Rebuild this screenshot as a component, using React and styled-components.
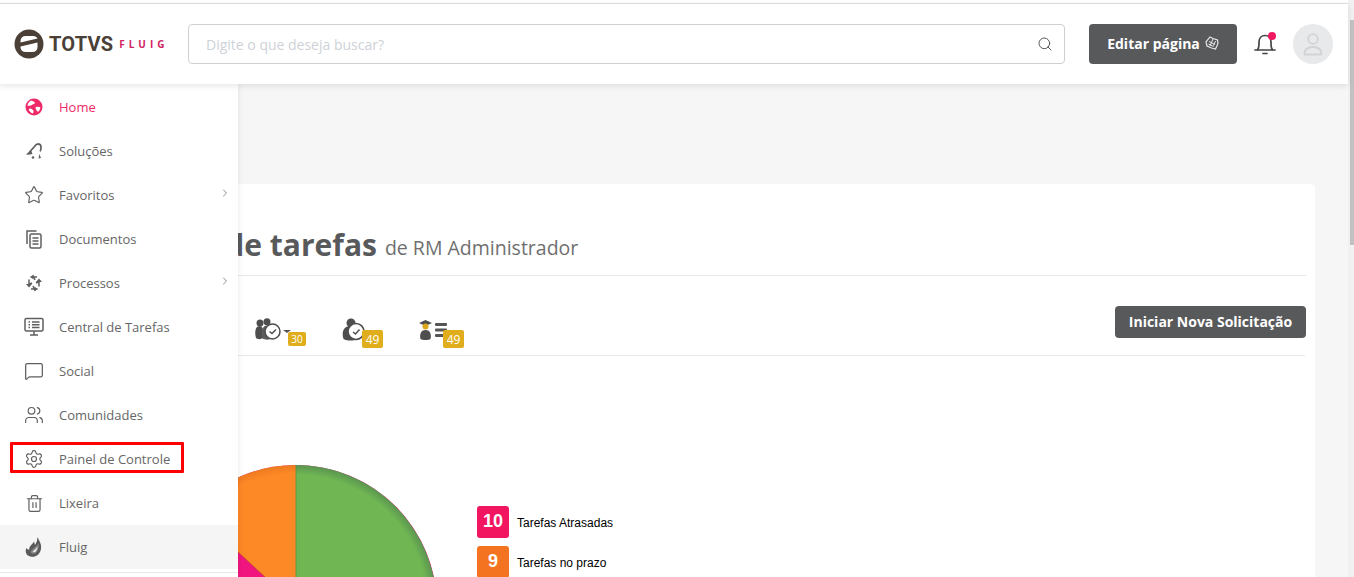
import React from "react";
import styled, { createGlobalStyle } from "styled-components";
import {
  ChevronRight,
  Search,
  Settings,
  Star,
  Trash2,
  Users,
  MessageSquare,
} from "lucide-react";

const GlobalStyle = createGlobalStyle`
  html, body {
    margin: 0;
    padding: 0;
    height: 100%;
    overflow: hidden;
    background: #fff;
    font-family: "Open Sans", "Liberation Sans", sans-serif;
  }
  * { box-sizing: border-box; }
`;

const GlobeIcon = () => (
  <svg width="18" height="18" viewBox="0 0 18 18">
    <circle cx="9" cy="9" r="8.5" fill="#ee2a68" />
    <path
      d="M6 2.500c2 .6 3.500 1 4 2.400-.7 1.400-2.600.9-3.200 2.200-1 1.100-3 .7-4.300.9C2.500 5.500 4 3.400 6 2.500zM11 9c1.600-.6 3.400-.4 4.400.4-.2 1.800-1 3.300-2.400 4.400-1.200-.8-1.400-2-2.200-2.800-.4-.7-.4-1.500.2-2zM5 10.500c1.500.2 3 1 3.500 2.300.2 1-.3 1.900-.5 2.600-2-.4-3.600-2-4.200-4 .3-.5.700-.8 1.200-.9z"
      fill="#fff"
    />
  </svg>
);

const SolucoesIcon = () => (
  <svg width="18" height="18" viewBox="0 0 18 18" fill="none" stroke="#5f5f5f" strokeWidth="1.700">
    <path d="M5 9.500 9.500 4.500C10.500 2.800 12 1.800 13.500 1.800c1.500.2 2.500 1.500 2.500 3.500 0 1.300-.2 2.500-.6 3.500" strokeLinecap="round" />
    <path d="M1 12.500 6 8l1.500 4-4 .8z" fill="#5f5f5f" stroke="none" />
    <circle cx="8" cy="15.500" r="1.300" fill="#5f5f5f" stroke="none" />
    <path d="M14.300 12l1.700 4-2.400.5z" fill="#5f5f5f" stroke="none" />
  </svg>
);

const DocumentsIcon = () => (
  <svg width="20" height="20" viewBox="0 0 20 20" fill="none" stroke="#5f5f5f" strokeWidth="1.500">
    <path d="M3 15V2h9.500" />
    <rect x="6" y="5" width="11" height="14" rx="1.500" />
    <path d="M8.500 9h6M8.500 12h6M8.500 15h6" strokeWidth="1.300" />
  </svg>
);

const ProcessosIcon = () => (
  <svg width="20" height="20" viewBox="0 0 20 20" fill="none" stroke="#5f5f5f" strokeWidth="1.500">
    <path d="M13 4H6.500M11 7 9 2.500" />
    <path d="M6.500 4 9.500 1.500V6.500z" fill="#5f5f5f" stroke="none" />
    <path d="M15 13.500V7.500M12 10l4.500-2" />
    <path d="M15 5.500l3 3.500h-6z" fill="#5f5f5f" stroke="none" />
    <path d="M7 16h6.500M9 13l2 4.500" />
    <path d="M13.500 16l-3 2.500v-5z" fill="#5f5f5f" stroke="none" />
    <path d="M5 6.500v6M8 10l-4.500 2" />
    <path d="M5 14.500l-3-3.500h6z" fill="#5f5f5f" stroke="none" />
  </svg>
);

const MonitorIcon = () => (
  <svg width="20" height="20" viewBox="0 0 20 20" fill="none" stroke="#5f5f5f" strokeWidth="1.500">
    <rect x="1" y="1.500" width="18" height="12.500" rx="1.500" />
    <path d="M6 18h8M10 14v4M4.500 5h1.500M4.500 7.700h1.500M4.500 10.400h1.500M8 5h7.500M8 7.700h7.500M8 10.400h7.500" />
  </svg>
);

const FluigIcon = () => (
  <svg width="18" height="20" viewBox="0 0 18 20">
    <path d="M12.500 0c.8 2 2.500 4.500 3.300 7.500.8 3.500.1 7.500-2.800 10.200-2.700 2.300-7 2.700-10 .8C.6 16.800 0 13.500 1.500 11c1 1.500 1.800 1.800 2.800 1.500C3.800 9 8 7 9 4.500c.5 1.500.9 2.500 1 3.500 1.500-2 2.400-5 2.500-8z" fill="#5a5a5a" />
    <path d="M5.500 15c2-3.500 5.500-4.500 8-8.500.5 4-.5 8-3.500 10-1.500.6-3.500.5-4.500-1.500z" fill="#8a8a8a" />
    <path d="M8 14.500c2-1.500 3.500-3 4.500-5-.1 2.500-1 4.500-2.800 5.700-.7.300-1.300 0-1.700-.7z" fill="#f5f5f5" />
  </svg>
);

const LogoMark = () => (
  <svg width="30" height="30" viewBox="0 0 30 30">
    <circle cx="15" cy="15" r="14.500" fill="#4a4038" />
    <path d="M6.500 12.500Q6.500 7 12 7H19Q22.500 7 23.500 9.500L6.500 13.500Z" fill="#fff" />
    <path d="M6.500 17.500 23.500 13.500V18Q23.500 23 18 23H12Q6.500 23 6.500 18Z" fill="#fff" />
  </svg>
);

const BellIcon = () => (
  <svg width="24" height="26" viewBox="0 0 24 26" fill="none" stroke="#444" strokeWidth="1.700">
    <path d="M2 19h20M4.500 19c1-1.500 1.500-3 1.500-5.500V11c0-3.800 2.500-6.500 6-6.500s6 2.700 6 6.500v2.500c0 2.500.5 4 1.500 5.500" strokeLinecap="round" />
    <path d="M10 22.500h4" strokeLinecap="round" />
  </svg>
);

const UserIcon = () => (
  <svg width="20" height="23" viewBox="0 0 20 23" fill="none" stroke="#d2d3d5" strokeWidth="1.800">
    <circle cx="10" cy="6" r="4.800" />
    <path d="M1.500 21.500c0-4.500 3-7.500 8.500-7.500s8.500 3 8.500 7.500z" strokeLinejoin="round" />
  </svg>
);

const StampIcon = () => (
  <svg width="14" height="14" viewBox="0 0 14 14" fill="none" stroke="#e8e8e8" strokeWidth="1.200">
    <path d="M5 1 8 2.500 12.500 4 13 7.500 10.500 13 6.500 12 2 10 1 6z" />
    <path d="M4 5.500 10 8.500M3.500 8 8.500 10.500M8 3 5 10M10.500 5 8.500 9.500" strokeWidth="1" />
  </svg>
);

const TaskGroupIcon = () => (
  <svg width="30" height="24" viewBox="0 0 30 24">
    <circle cx="5" cy="5" r="3.500" fill="#4e4e4e" />
    <path d="M1 20C-.5 15 0 8 4.500 8 7 8 8 10 8 13v7c-2 1.500-5.500 1.500-7 0z" fill="#4e4e4e" />
    <circle cx="12" cy="3.800" r="3.500" fill="#4e4e4e" />
    <path d="M7.500 20.500c-1.500-5 -1-13 4.500-13 3 0 5 2 5 5v8c-2.500 1.500-7.500 1.500-9.500 0z" fill="#5c5c5c" />
    <circle cx="17.500" cy="13.500" r="7.500" fill="#fff" stroke="#4e4e4e" strokeWidth="1.500" />
    <path d="M14.500 13.500l2.500 2 4-4" fill="none" stroke="#4e4e4e" strokeWidth="1.500" />
  </svg>
);

const TaskSingleIcon = () => (
  <svg width="26" height="24" viewBox="0 0 26 24">
    <circle cx="9" cy="5" r="4.500" fill="#4e4e4e" />
    <path d="M1.500 21C-.5 15 1 8 8 8c4 0 7 2 7 5v8.500c-3.500 1.500-10 1.500-13.500-.500z" fill="#4e4e4e" />
    <circle cx="14" cy="13.500" r="8" fill="#fff" stroke="#4e4e4e" strokeWidth="1.600" />
    <path d="M11 14l2.500 2 4-4.500" fill="none" stroke="#4e4e4e" strokeWidth="1.500" />
  </svg>
);

const TaskTeacherIcon = () => (
  <svg width="30" height="24" viewBox="0 0 30 24">
    <path d="M0 5 6.500 2 13 5 6.500 8z" fill="#4e4e4e" />
    <circle cx="6.500" cy="8.500" r="3" fill="#d9a91a" />
    <path d="M1.500 21c-1-4 0-9 5-9s6 5 5 9c-2 1.300-8 1.300-10 0z" fill="#4e4e4e" />
    <rect x="16" y="5" width="12" height="3" rx="1" fill="#555" />
    <rect x="16" y="10.500" width="12" height="3" rx="1" fill="#555" />
    <rect x="16" y="16" width="12" height="3" rx="1" fill="#555" />
  </svg>
);

const slicePath = (dx, dy, r) => {
  const k = r / Math.hypot(dx, dy);
  return `M${r} ${r}L${r} 0A${r} ${r} 0 0 0 ${r + dx * k} ${r + dy * k}Z`;
};

const PieChart = () => (
  <svg width="282" height="282" viewBox="0 0 282 282">
    <defs>
      <radialGradient id="greenFill" gradientUnits="userSpaceOnUse" cx="141" cy="141" r="141">
        <stop offset="0.93" stopColor="#70b753" />
        <stop offset="1" stopColor="#5a9450" />
      </radialGradient>
      <radialGradient id="orangeFill" gradientUnits="userSpaceOnUse" cx="141" cy="141" r="141">
        <stop offset="0.94" stopColor="#fd8826" />
        <stop offset="1" stopColor="#ee7a20" />
      </radialGradient>
    </defs>
    <circle cx="141" cy="141" r="141" fill="#f0157f" />
    <path d="M141 141V0A141 141 0 1 1 20 214Z" fill="url(#greenFill)" />
    <path d={slicePath(-58, -54, 141)} fill="url(#orangeFill)" />
    <path d="M141 141V0" stroke="#568f45" strokeWidth="0.800" />
    <path d="M141 141 38 45" stroke="#b8452f" strokeWidth="0.800" />
  </svg>
);

const menu = [
  { label: "Home", icon: <GlobeIcon />, active: true },
  { label: "Soluções", icon: <SolucoesIcon /> },
  { label: "Favoritos", icon: <Star size={20} strokeWidth={1.400} />, arrow: true },
  { label: "Documentos", icon: <DocumentsIcon /> },
  { label: "Processos", icon: <ProcessosIcon />, arrow: true },
  { label: "Central de Tarefas", icon: <MonitorIcon /> },
  { label: "Social", icon: <MessageSquare size={20} strokeWidth={1.500} /> },
  { label: "Comunidades", icon: <Users size={20} strokeWidth={1.400} /> },
  { label: "Painel de Controle", icon: <Settings size={20} strokeWidth={1.400} />, marked: true },
  { label: "Lixeira", icon: <Trash2 size={19} strokeWidth={1.500} /> },
  { label: "Fluig", icon: <FluigIcon />, shaded: true },
];

const tabs = [
  { icon: <TaskGroupIcon />, count: 30, small: true, left: 33, gap: 57 },
  { icon: <TaskSingleIcon />, count: 49, left: 20, gap: 47 },
  { icon: <TaskTeacherIcon />, count: 49, left: 24, gap: 0 },
];

const legend = [
  { value: 10, label: "Tarefas Atrasadas", color: "#f2155f" },
  { value: 9, label: "Tarefas no prazo", color: "#f47321" },
];

export default function App() {
  return (
    <>
      <GlobalStyle />
      <Page>
        <Main>
          <Header>
            <Logo>
              <LogoMark />
              <LogoName>TOTVS</LogoName>
              <LogoProduct>FLUIG</LogoProduct>
            </Logo>
            <SearchBox>
              <SearchText>Digite o que deseja buscar?</SearchText>
              <Search size={16} color="#555" strokeWidth={1.500} />
            </SearchBox>
            <EditButton>
              Editar página <StampIcon />
            </EditButton>
            <Bell>
              <BellIcon />
              <BellDot />
            </Bell>
            <Avatar>
              <UserIcon />
            </Avatar>
          </Header>

          <Body>
            <Sidebar>
              {menu.map(item => (
                <MenuItem key={item.label} $active={item.active} $shaded={item.shaded}>
                  <MenuIcon>{item.icon}</MenuIcon>
                  <MenuLabel>{item.label}</MenuLabel>
                  {item.arrow && (
                    <MenuArrow>
                      <ChevronRight size={12} strokeWidth={1.500} />
                    </MenuArrow>
                  )}
                  {item.marked && <RedMark />}
                </MenuItem>
              ))}
              <SidebarRule />
            </Sidebar>

            <Card>
              <TitleRow>
                <Title>Central de tarefas</Title>
                <Subtitle>de RM Administrador</Subtitle>
              </TitleRow>
              <TabsRow>
                <Tabs>
                  {tabs.map((tab, i) => (
                    <Tab key={i} $gap={tab.gap}>
                      {tab.icon}
                      {tab.small && <Caret />}
                      <Badge $small={tab.small} $left={tab.left}>
                        {tab.count}
                      </Badge>
                    </Tab>
                  ))}
                </Tabs>
                <StartButton>Iniciar Nova Solicitação</StartButton>
              </TabsRow>
              <Chart>
                <PieChart />
                <Legend>
                  {legend.map(item => (
                    <LegendRow key={item.label}>
                      <LegendValue $color={item.color}>{item.value}</LegendValue>
                      <LegendLabel>{item.label}</LegendLabel>
                    </LegendRow>
                  ))}
                </Legend>
              </Chart>
            </Card>
          </Body>
        </Main>
        <ScrollTrack>
          <ScrollThumb />
        </ScrollTrack>
      </Page>
    </>
  );
}

const Page = styled.div`
  display: flex;
  width: 1354px;
  height: 577px;
  overflow: hidden;
  background: #fff;
`;

const Main = styled.div`
  flex: 1;
  min-width: 0;
  display: flex;
  flex-direction: column;
  padding-top: 3px;
`;

const Header = styled.header`
  position: relative;
  z-index: 3;
  flex: none;
  height: 81px;
  display: flex;
  align-items: center;
  padding: 0 14px;
  background: #fff;
  border-top: 1px solid #dcdcdc;
  box-shadow: 0 2px 6px rgba(0, 0, 0, 0.1);
`;

const Logo = styled.div`
  width: 160px;
  flex: none;
  display: flex;
  align-items: center;
`;

const LogoName = styled.span`
  margin-left: 5px;
  font-family: Roboto, sans-serif;
  font-size: 20px;
  font-weight: 700;
  letter-spacing: 0.2px;
  color: #4a4038;
`;

const LogoProduct = styled.span`
  margin-left: 6px;
  font-size: 10px;
  font-weight: 700;
  letter-spacing: 4px;
  color: #d0245f;
`;

const SearchBox = styled.div`
  width: 877px;
  height: 40px;
  margin-left: 14px;
  padding: 0 11px 0 17px;
  display: flex;
  align-items: center;
  justify-content: space-between;
  border: 1px solid #cfcfcf;
  border-radius: 4px;
`;

const SearchText = styled.span`
  font-size: 14px;
  color: #ced2d8;
`;

const EditButton = styled.div`
  width: 148px;
  height: 40px;
  margin-left: 24px;
  padding-bottom: 2px;
  display: flex;
  align-items: center;
  justify-content: center;
  gap: 5px;
  border-radius: 4px;
  background: #58595b;
  color: #fff;
  font-size: 14px;
  font-weight: 700;
`;

const Bell = styled.div`
  position: relative;
  margin-left: 16px;
  width: 24px;
  height: 26px;
`;

const BellDot = styled.span`
  position: absolute;
  top: 1px;
  right: 1px;
  width: 8px;
  height: 8px;
  border-radius: 50%;
  background: #f0185f;
`;

const Avatar = styled.div`
  width: 40px;
  height: 40px;
  margin-left: 16px;
  display: flex;
  align-items: center;
  justify-content: center;
  border-radius: 50%;
  background: #e8e9ea;
`;

const Body = styled.div`
  position: relative;
  flex: 1;
  min-height: 0;
  padding: 100px 33px 0 40px;
  background: #f6f6f6;
`;

const Sidebar = styled.nav`
  position: absolute;
  z-index: 2;
  top: 0;
  left: 0;
  width: 238px;
  height: 100%;
  padding-top: 1px;
  background: #fff;
  box-shadow: 0 0 6px rgba(0, 0, 0, 0.1);
`;

const MenuItem = styled.div`
  position: relative;
  height: 44px;
  display: flex;
  align-items: center;
  color: ${p => (p.$active ? "#ee2a68" : "#666")};
  background: ${p => (p.$shaded ? "#f5f5f5" : "transparent")};
`;

const MenuIcon = styled.span`
  width: 59px;
  padding-left: 9px;
  flex: none;
  display: flex;
  justify-content: center;
  color: #5f5f5f;
`;

const MenuLabel = styled.span`
  font-size: 13px;
`;

const MenuArrow = styled.span`
  position: absolute;
  right: 7px;
  top: 14px;
  display: flex;
  color: #666;
`;

const RedMark = styled.span`
  position: absolute;
  left: 10px;
  top: 5px;
  width: 174px;
  height: 31px;
  border: 3px solid #ff0000;
  border-radius: 1px;
`;

const SidebarRule = styled.div`
  margin-top: 3px;
  border-top: 1px solid #e6e6e6;
`;

const Card = styled.section`
  height: 100%;
  padding: 0 9px 0 10px;
  overflow: hidden;
  background: #fff;
  border-radius: 4px 4px 0 0;
`;

const TitleRow = styled.div`
  height: 92px;
  padding: 0 0 10px 57px;
  display: flex;
  align-items: flex-end;
  gap: 8px;
  border-bottom: 1px solid #e8e8e8;
`;

const Title = styled.h1`
  margin: 0;
  font-size: 30px;
  line-height: 40px;
  font-weight: 700;
  color: #58595b;
`;

const Subtitle = styled.span`
  font-size: 19.5px;
  line-height: 34px;
  color: #6f6f6f;
`;

const TabsRow = styled.div`
  height: 80px;
  display: flex;
  align-items: flex-start;
  justify-content: space-between;
  border-bottom: 1px solid #e8e8e8;
  margin-right: 1px;
`;

const Tabs = styled.div`
  display: flex;
  padding: 42px 0 0 205px;
`;

const Tab = styled.div`
  position: relative;
  width: 30px;
  height: 24px;
  margin-right: ${p => p.$gap}px;
`;

const Caret = styled.span`
  position: absolute;
  left: 28px;
  top: 12px;
  border-style: solid;
  border-width: 3px 4px 0;
  border-color: #555 transparent transparent;
`;

const Badge = styled.span`
  position: absolute;
  left: ${p => p.$left}px;
  top: ${p => (p.$small ? "14px" : "12px")};
  width: ${p => (p.$small ? "18px" : "21px")};
  height: ${p => (p.$small ? "14px" : "18px")};
  display: flex;
  align-items: center;
  justify-content: center;
  border-radius: 2px;
  background: #e0ae1c;
  color: #fff;
  font-size: ${p => (p.$small ? "10px" : "12px")};
`;

const StartButton = styled.div`
  width: 191px;
  height: 32px;
  margin-right: -1px;
  margin-top: 30px;
  padding-bottom: 1px;
  display: flex;
  align-items: center;
  justify-content: center;
  border-radius: 4px;
  background: #58595b;
  color: #fff;
  font-size: 14px;
  font-weight: 700;
`;

const Chart = styled.div`
  display: flex;
  padding: 109px 0 0 105px;
`;

const Legend = styled.div`
  margin: 41px 0 0 40px;
  display: flex;
  flex-direction: column;
  gap: 8px;
`;

const LegendRow = styled.div`
  display: flex;
  align-items: center;
  gap: 8px;
`;

const LegendValue = styled.span`
  width: 32px;
  height: 32px;
  display: flex;
  align-items: center;
  justify-content: center;
  padding-bottom: 1px;
  border-radius: 3px;
  background: ${p => p.$color};
  color: #fff;
  font-family: "Liberation Sans", sans-serif;
  font-size: 18px;
  font-weight: 700;
`;

const LegendLabel = styled.span`
  padding-top: 2px;
  font-family: "Liberation Sans", sans-serif;
  font-size: 12px;
  color: #000;
`;

const ScrollTrack = styled.div`
  width: 6px;
  flex: none;
  padding: 20px 0 0 2px;
  background: #f1f1f1;
`;

const ScrollThumb = styled.div`
  height: 225px;
  background: #c1c1c1;
`;
